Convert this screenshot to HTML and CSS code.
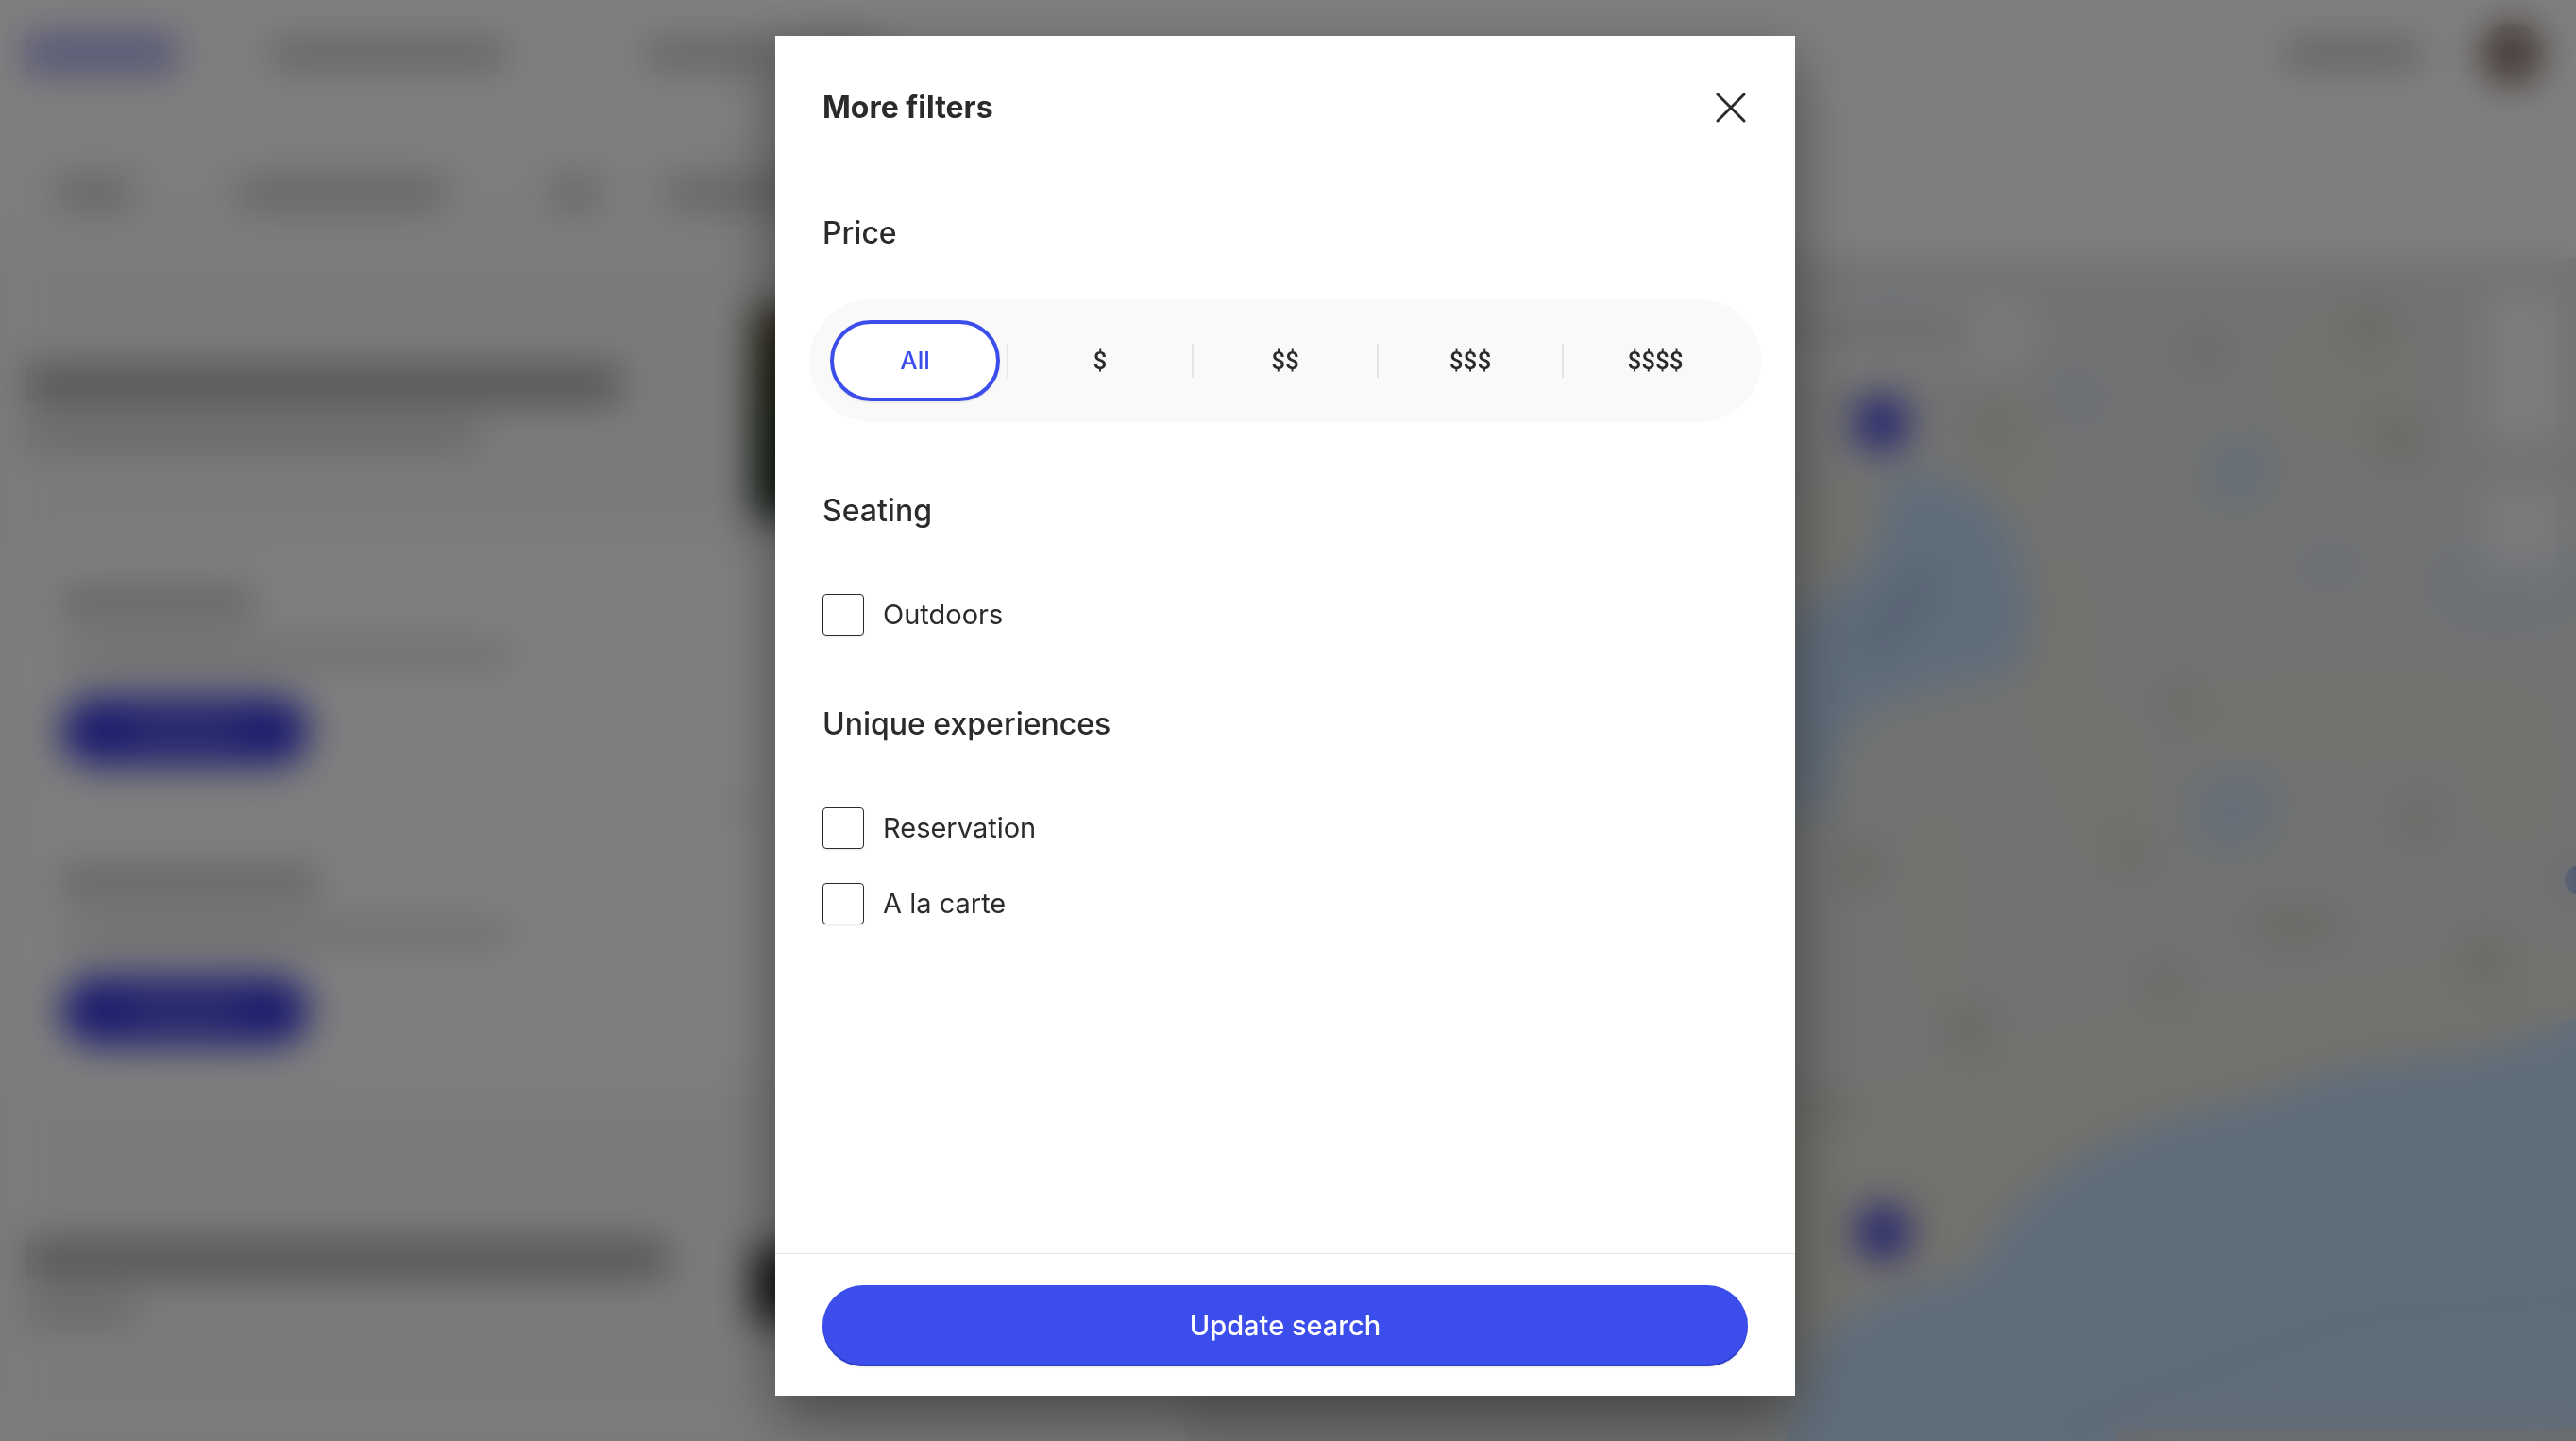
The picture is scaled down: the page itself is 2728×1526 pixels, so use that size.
FILE: index.html
```html
<!DOCTYPE html>
<html lang="en">
<head>
<meta charset="utf-8">
<title>More filters</title>
<meta name="viewport" content="width=device-width, initial-scale=1">
<link rel="stylesheet" href="styles.css">
</head>
<body>
<div class="page" aria-hidden="true">
  <div class="masthead">
    <div class="nav">
      <span class="bar bar-logo"></span>
      <span class="bar bar-nav"></span>
      <span class="bar bar-nav"></span>
      <span class="bar bar-account"></span>
      <span class="avatar"></span>
    </div>
    <div class="toolbar">
      <span class="bar bar-chip"></span>
      <span class="bar bar-chip bar-chip-wide"></span>
      <span class="bar bar-chip bar-chip-small"></span>
      <span class="bar bar-chip bar-chip-wide"></span>
    </div>
  </div>
  <div class="content">
    <div class="list">
      <div class="place">
        <div class="place-text">
          <span class="bar bar-title"></span>
          <span class="bar bar-sub"></span>
        </div>
        <span class="thumb"></span>
      </div>
      <div class="cards">
        <div class="card">
          <span class="bar bar-card-title"></span>
          <span class="bar bar-card-sub"></span>
          <span class="pill"><span class="pill-text"></span></span>
        </div>
        <div class="card">
          <span class="bar bar-card-title bar-long"></span>
          <span class="bar bar-card-sub"></span>
          <span class="pill"><span class="pill-text"></span></span>
        </div>
      </div>
      <div class="place place-next">
        <div class="place-text">
          <span class="bar bar-title bar-long"></span>
          <span class="bar bar-sub bar-short"></span>
        </div>
        <span class="thumb thumb-dark"></span>
      </div>
    </div>
    <svg class="map" viewBox="1250 272 1478 1254" preserveAspectRatio="xMaxYMin slice">
      <rect x="1250" y="272" width="1478" height="1254" fill="#e4e5e3"/>
      <g fill="#e7e4da">
        <ellipse cx="2130" cy="480" rx="40" ry="60"/>
        <ellipse cx="2180" cy="700" rx="30" ry="120"/>
        <ellipse cx="2500" cy="760" rx="190" ry="40"/>
        <ellipse cx="2230" cy="830" rx="40" ry="80"/>
        <ellipse cx="2480" cy="400" rx="70" ry="60"/>
        <ellipse cx="1950" cy="560" rx="40" ry="50"/>
        <path d="M1890 1190 2240 1080 2728 1010V1090L2480 1140 2230 1215 2090 1350 1890 1400z"/>
        <ellipse cx="2660" cy="810" rx="40" ry="80"/>
        <ellipse cx="2050" cy="960" rx="24" ry="110"/>
      </g>
      <g fill="#cfcec6">
        <circle cx="2335" cy="372" r="18"/>
        <circle cx="2510" cy="345" r="22"/>
        <circle cx="2540" cy="465" r="24"/>
        <circle cx="2110" cy="452" r="20"/>
        <circle cx="2310" cy="745" r="18"/>
        <circle cx="1970" cy="918" r="24"/>
        <circle cx="2258" cy="905" r="18"/>
        <circle cx="2085" cy="1090" r="24"/>
        <circle cx="2292" cy="1042" r="20"/>
        <circle cx="2560" cy="868" r="20"/>
        <circle cx="2630" cy="1016" r="24"/>
        <ellipse cx="2430" cy="980" rx="50" ry="16"/>
        <ellipse cx="1930" cy="1172" rx="36" ry="12"/>
      </g>
      <g fill="#c0daf6">
        <path d="M2728 1077 2638 1112 2478 1131 2398 1160 2291 1185 2211 1219 2157 1258 2120 1292 2093 1341 1970 1380 1922 1429 1890 1526H2728z"/>
        <path d="M1997 508 2024 500 2093 520 2125 551 2152 638 2141 709 2050 730 1981 750 1943 790 1935 860H1890V660L1922 643 1970 602 1992 551z"/>
        <path d="M2340 475 2396 465 2402 520 2345 540z" opacity=".8"/>
        <path d="M2325 825 2410 815 2402 895 2325 900z" opacity=".7"/>
      </g>
      <g fill="#dbe2eb">
        <ellipse cx="2467" cy="600" rx="46" ry="34"/>
        <ellipse cx="2650" cy="620" rx="90" ry="60"/>
        <ellipse cx="2200" cy="420" rx="40" ry="40"/>
        <ellipse cx="2005" cy="320" rx="60" ry="30"/>
      </g>
      <g fill="#b2cbe8">
        <ellipse cx="2010" cy="650" rx="30" ry="70" transform="rotate(40 2010 650)"/>
        <path d="M2150 1500 2480 1380 2728 1360V1390L2500 1410 2200 1526z" opacity=".35"/>
      </g>
      <rect x="2240" y="1512" width="488" height="14" fill="#d8d8d8"/>
      <g fill="#fff">
        <rect x="1600" y="318" width="554" height="70" rx="35" opacity=".7"/>
        <rect x="2634" y="310" width="72" height="156" rx="12" opacity=".85"/>
        <rect x="2630" y="518" width="76" height="84" rx="12" opacity=".7"/>
      </g>
      <rect x="1850" y="342" width="240" height="20" fill="#c4c4c4"/>
      <g fill="#3c3cdc">
        <rect x="1965" y="421" width="54" height="54" rx="20"/>
        <rect x="1967" y="1278" width="54" height="54" rx="20"/>
      </g>
      <circle cx="2732" cy="932" r="16" fill="#7f9fe8"/>
    </svg>
  </div>
</div>

<div class="overlay">
  <form class="modal" role="dialog" aria-modal="true" aria-labelledby="modal-title">
    <header class="modal-header">
      <h1 class="modal-title" id="modal-title">More filters</h1>
      <button class="close" type="button" aria-label="Close">
        <svg class="close-icon" viewBox="0 0 32 32" aria-hidden="true"><path d="M2 2 30 30M30 2 2 30"/></svg>
      </button>
    </header>

    <div class="modal-body">
      <section class="group">
        <h2 class="group-title" id="price-title">Price</h2>
        <div class="segments" role="radiogroup" aria-labelledby="price-title">
          <label class="segment"><input class="segment-input" type="radio" name="price" checked><span class="segment-label">All</span></label>
          <label class="segment"><input class="segment-input" type="radio" name="price"><span class="segment-label segment-label-symbol">$</span></label>
          <label class="segment"><input class="segment-input" type="radio" name="price"><span class="segment-label segment-label-symbol">$$</span></label>
          <label class="segment"><input class="segment-input" type="radio" name="price"><span class="segment-label segment-label-symbol">$$$</span></label>
          <label class="segment"><input class="segment-input" type="radio" name="price"><span class="segment-label segment-label-symbol">$$$$</span></label>
        </div>
      </section>

      <section class="group">
        <h2 class="group-title">Seating</h2>
        <div class="options">
          <label class="option"><input class="checkbox" type="checkbox">Outdoors</label>
        </div>
      </section>

      <section class="group">
        <h2 class="group-title">Unique experiences</h2>
        <div class="options">
          <label class="option"><input class="checkbox" type="checkbox">Reservation</label>
          <label class="option"><input class="checkbox" type="checkbox">A la carte</label>
        </div>
      </section>
    </div>

    <footer class="modal-footer">
      <button class="submit" type="submit">Update search</button>
    </footer>
  </form>
</div>
</body>
</html>
```
FILE: styles.css
```css
* {
  box-sizing: border-box;
}

body {
  margin: 0;
  background: #fff;
  color: #2b2b2b;
  font-family: Inter, "Liberation Sans", sans-serif;
}

/* Page behind the dialog */

.page {
  display: flex;
  flex-direction: column;
  height: 100vh;
  overflow: hidden;
}

.bar {
  display: block;
  height: 30px;
  background: #c2c2c2;
}

.masthead {
  flex: none;
  height: 272px;
}

.nav {
  display: flex;
  align-items: center;
  gap: 98px;
  height: 114px;
  padding: 0 36px 0 26px;
}

.bar-logo {
  width: 162px;
  height: 42px;
  background: #a8a8ec;
}

.bar-nav {
  width: 250px;
}

.bar-nav + .bar-nav {
  margin-left: 50px;
}

.bar-account {
  width: 146px;
  margin-left: auto;
}

.avatar {
  width: 64px;
  height: 64px;
  margin-left: -34px;
  border-radius: 50%;
  background: #7c655c;
}

.toolbar {
  display: flex;
  align-items: center;
  gap: 112px;
  width: 46%;
  height: 180px;
  padding-left: 60px;
  background: linear-gradient(#fff, #f8f8f8);
}

.bar-chip {
  width: 80px;
}

.bar-chip-wide {
  width: 220px;
}

.bar-chip-small {
  width: 50px;
  margin-right: -40px;
}

.content {
  display: flex;
  flex: 1;
  min-height: 0;
}

.list {
  flex: none;
  width: 46%;
  background: #f7f7f7;
}

.place {
  display: flex;
  gap: 36px;
  height: 308px;
  padding-left: 28px;
}

.place-next {
  margin-top: 38px;
}

.place-text {
  display: flex;
  flex: none;
  flex-direction: column;
  gap: 20px;
  width: 734px;
  padding-top: 115px;
}

.bar-title {
  width: 630px;
  height: 40px;
  background: #a8a8a8;
}

.bar-title.bar-long {
  width: 680px;
}

.bar-sub {
  width: 480px;
  height: 30px;
  background: #cfcfcf;
}

.bar-sub.bar-short {
  width: 116px;
}

.thumb {
  width: 240px;
  height: 224px;
  margin-top: 52px;
  background: linear-gradient(#5a4a34, #2e3a1c 40%, #1e3226);
}

.thumb-dark {
  height: 80px;
  margin-top: 122px;
  background: #2c2c2c;
}

.cards {
  display: flex;
  flex-direction: column;
  gap: 44px;
  margin-left: 30px;
  padding-bottom: 32px;
  background: #fcfcfc;
}

.card {
  display: flex;
  flex-direction: column;
  padding: 43px 34px 21px;
  background: #fff;
}

.bar-card-title {
  width: 206px;
  height: 30px;
}

.bar-card-title.bar-long {
  width: 274px;
}

.bar-card-sub {
  width: 480px;
  height: 26px;
  margin: 26px 0 33px;
  background: #dadada;
}

.pill {
  display: flex;
  align-items: center;
  justify-content: center;
  width: 264px;
  height: 73px;
  border-radius: 37px;
  background: #3434dc;
}

.pill-text {
  width: 120px;
  height: 20px;
  background: #7070e4;
}

.map {
  flex: 1;
  min-width: 0;
  height: 100%;
}

/* Dialog */

.overlay {
  position: fixed;
  inset: 0;
  display: flex;
  justify-content: center;
  padding: 38px 6px 48px 0;
  background: rgba(0, 0, 0, 0.5);
  backdrop-filter: blur(20px);
}

.modal {
  display: flex;
  flex-direction: column;
  width: 100%;
  max-width: 1080px;
  background: #fff;
  box-shadow: 0 24px 60px rgba(0, 0, 0, 0.42);
}

.modal-header {
  display: flex;
  align-items: center;
  justify-content: space-between;
  padding: 52px 50px 0;
}

.modal-title,
.group-title {
  margin: 0;
  font-size: 32px;
  line-height: 48px;
  font-weight: 500;
}

.modal-title {
  font-weight: 700;
}

.close {
  display: flex;
  padding: 2px;
  border: 0;
  background: none;
  color: inherit;
  cursor: pointer;
}

.close-icon {
  width: 32px;
  height: 32px;
  fill: none;
  stroke: currentColor;
  stroke-width: 3;
  stroke-linecap: round;
}

.modal-body {
  display: flex;
  flex: 1;
  flex-direction: column;
  gap: 70px;
  min-height: 0;
  padding: 85px 50px 0;
  overflow: auto;
}

.segments {
  display: flex;
  margin: 46px -14px 0;
  padding: 22px 14px;
  border-radius: 65px;
  background: #f9f9f9;
}

.segment {
  display: flex;
  flex: 1;
  align-items: center;
  cursor: pointer;
}

.segment:not(:last-child)::after {
  flex: none;
  width: 2px;
  height: 36px;
  margin: 0 -1px;
  background: #e5e5e5;
  content: "";
}

.segment-input {
  width: 1px;
  height: 1px;
  margin: 0 -1px 0 0;
  appearance: none;
}

.segment-label {
  flex: 1;
  margin: 0 8px;
  border: 4px solid transparent;
  border-radius: 44px;
  font-size: 26px;
  line-height: 78px;
  font-weight: 500;
  text-align: center;
}

.segment-label-symbol {
  font-family: Roboto, "Liberation Sans", sans-serif;
}

.segment-input:checked + .segment-label {
  border-color: #3b4deb;
  background: #fff;
  color: #3b4deb;
  box-shadow: 0 2px 2px rgba(0, 0, 0, 0.06);
}

.options {
  display: flex;
  flex-direction: column;
  align-items: flex-start;
  gap: 36px;
  margin-top: 64px;
}

.option {
  display: flex;
  align-items: center;
  gap: 20px;
  font-size: 29px;
  line-height: 44px;
  cursor: pointer;
}

.checkbox {
  width: 44px;
  height: 44px;
  margin: 0;
  border: 1px solid #2b2b2b;
  border-radius: 4px;
  background: #fff;
  box-shadow: 0 2px 2px rgba(0, 0, 0, 0.06);
  appearance: none;
}

.checkbox:checked {
  background: #3b4deb;
}

.modal-footer {
  padding: 33px 50px 31px;
  border-top: 1px solid #e5e5e5;
}

.submit {
  display: block;
  width: 100%;
  height: 86px;
  padding: 0;
  border: 0;
  border-radius: 43px;
  background: #3b4deb;
  box-shadow: inset 0 -2px 0 #2f3ec4, 0 2px 2px rgba(0, 0, 0, 0.06);
  color: #fff;
  font: 500 29px/44px Inter, "Liberation Sans", sans-serif;
  cursor: pointer;
}
```
